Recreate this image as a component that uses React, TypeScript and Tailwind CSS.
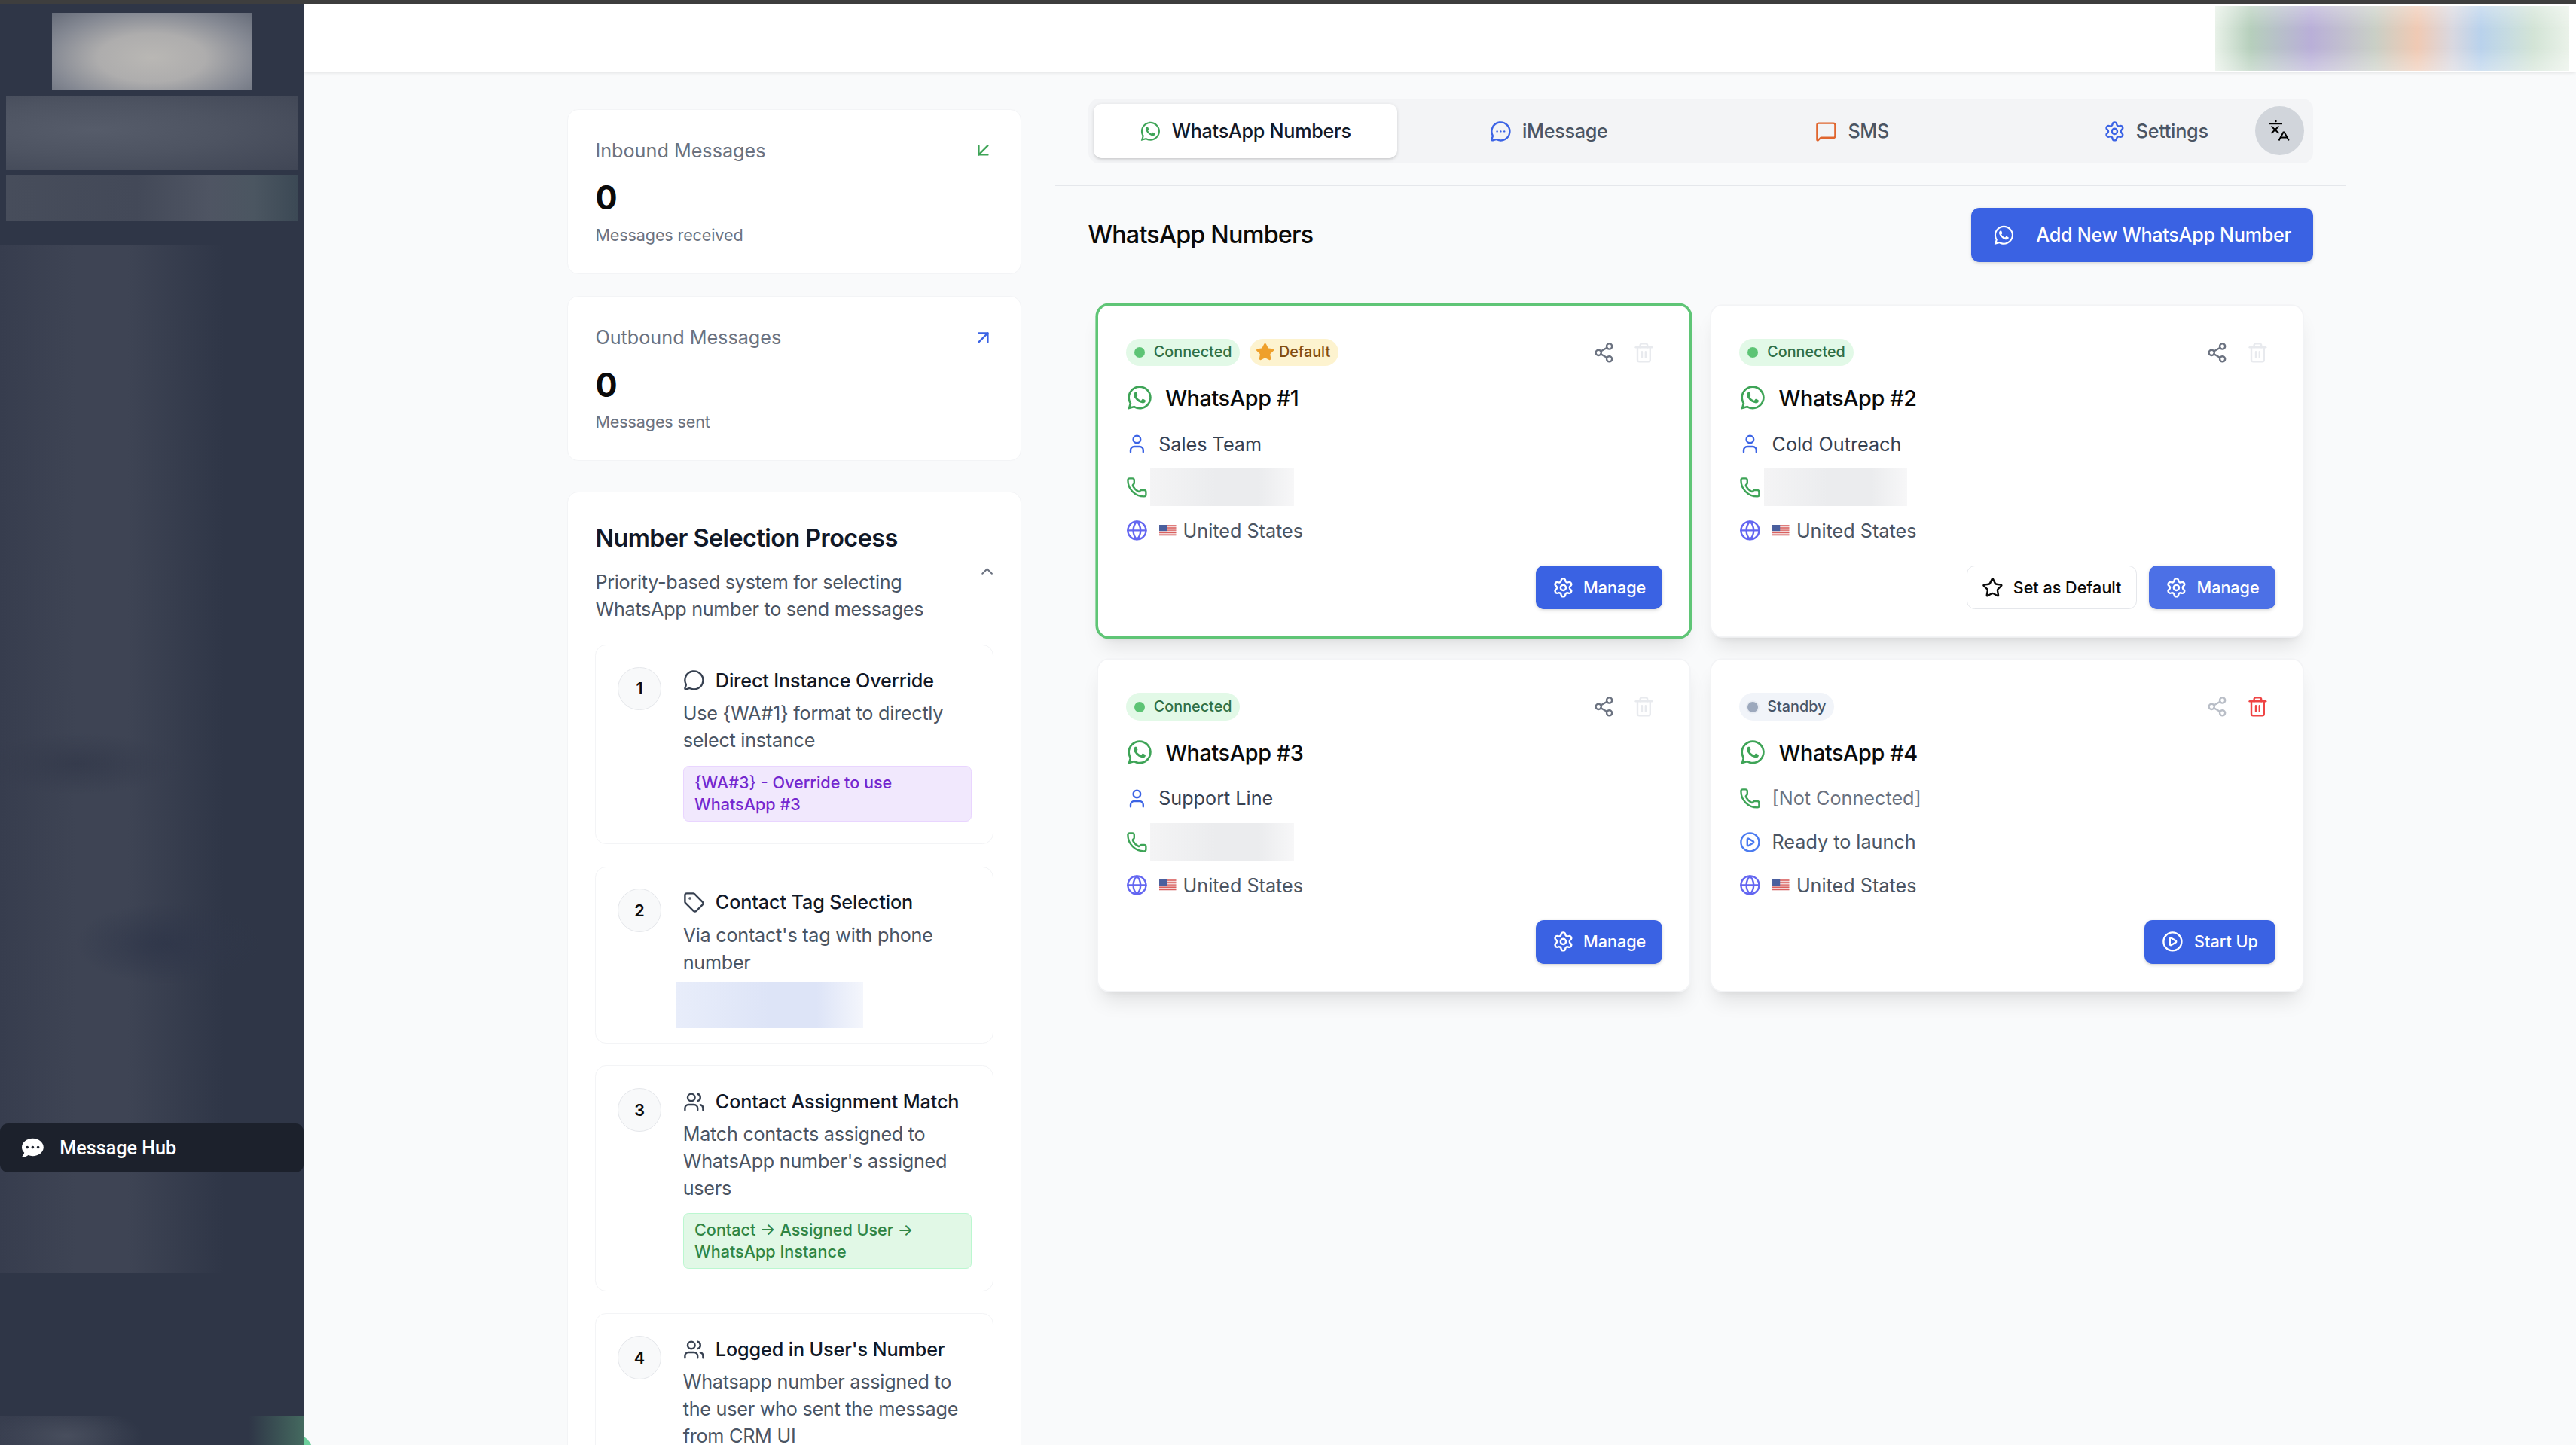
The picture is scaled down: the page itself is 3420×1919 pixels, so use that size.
import { ReactNode } from "react";
import {
  ArrowDownLeft,
  ArrowUpRight,
  ChevronUp,
  CirclePlay,
  Globe,
  MessageCircle,
  MessageCircleMore,
  MessageSquare,
  Phone,
  Settings,
  Share2,
  Star,
  Tag,
  Trash2,
  User,
  Users,
} from "lucide-react";
import { FaCommentDots, FaWhatsapp } from "react-icons/fa";

// the shot is a 1900px wide page at 1.8x, so the root is zoomed and the rest uses normal scale values

const TranslateIcon = () => (
  <svg viewBox="0 0 27 27" className="h-[15px] w-[15px]" fill="none" stroke="#000" strokeWidth="2">
    <circle cx="8.5" cy="1" r="1.2" fill="#000" stroke="none" />
    <path d="M0 4.2h17" />
    <path d="M2.5 7.5l10 9.5M12.5 7.5l-10 9.5" />
    <path d="M12.5 26.5l6-11 1.2 0 6 11M14.8 22.5h9" />
  </svg>
);

const UsFlag = () => (
  <svg viewBox="0 0 22 15" className="ml-[0.5px] h-[8.5px] w-[12.5px]">
    <rect width="22" height="15" fill="#f3d6d6" />
    <path d="M0 1h22M0 4h22M0 7h22M0 10h22M0 13h22" stroke="#d9605f" strokeWidth="1.4" />
    <rect width="10" height="8" fill="#4a5f9e" />
  </svg>
);

type CardRow = { icon: ReactNode; text?: ReactNode; blurred?: boolean; className?: string };

const userIcon = <User size={16} className="text-[#3b63e5]" />;
const phoneIcon = <Phone size={16} className="text-[#3ea457]" />;
const globeIcon = <Globe size={16} className="text-[#6366f1]" />;
const country = (
  <span className="flex items-center gap-[5px] text-[#4b5563]">
    <UsFlag />
    United States
  </span>
);

const ManageButton = ({ faded = false }: { faded?: boolean }) => (
  <button className={`flex h-8 items-center gap-[7px] rounded-md px-3 text-xs font-medium text-white shadow-sm ${faded ? "bg-[#4c70e6]" : "bg-[#3a62e3]"}`}>
    <Settings size={16} />
    Manage
  </button>
);

const Badge = ({ label, tone }: { label: string; tone: "green" | "gray" }) => (
  <span className={`flex h-[20.5px] items-center gap-[6.5px] rounded-full pl-[6px] pr-[6px] text-[11px] font-medium ${tone === "green" ? "bg-[#e2f9e7] text-[#2f6f45]" : "bg-[#f1f4f9] text-[#475569]"}`}>
    <span className={`h-2 w-2 rounded-full ${tone === "green" ? "bg-[#5dc475]" : "bg-[#9ca8bc] ring-1 ring-[#e6eaf1]"}`} />
    {label}
  </span>
);

const NumberCard = ({
  title,
  badges,
  rows,
  footer,
  active = false,
  shareFaded = false,
  trashRed = false,
}: {
  title: string;
  badges: ReactNode;
  rows: CardRow[];
  footer: ReactNode;
  active?: boolean;
  shareFaded?: boolean;
  trashRed?: boolean;
}) => (
  <div className={`rounded-lg bg-white pb-5 pl-[20.5px] pr-5 pt-[20.7px] shadow-lg ${active ? "ring-2 ring-[#5fc576]" : "ring-1 ring-gray-100"}`}>
    <div className="flex h-7 items-center justify-between">
      <div className="flex items-center gap-[7px]">{badges}</div>
      <div className="-mr-[0.5px] flex items-center gap-[1.5px]">
        <button className="p-1.5">
          <Share2 size={16} className={shareFaded ? "text-[#b9bec7]" : "text-[#6b7280]"} />
        </button>
        <button className="p-1.5">
          <Trash2 size={16} className={trashRed ? "text-[#ef4444]" : "text-[#e8eaee]"} />
        </button>
      </div>
    </div>
    <div className="mt-[7.5px] flex h-6 items-center gap-[9px] text-base font-medium tracking-[-0.014em] text-[#0a0a0a]">
      <FaWhatsapp size={20} className="text-[#3ea457]" />
      {title}
    </div>
    <div className="mt-3 flex flex-col gap-3">
      {rows.map((row, index) => (
        <div key={index} className={`flex h-5 items-center gap-2 text-sm ${row.className ?? "text-[#374151]"}`}>
          {row.icon}
          {row.blurred ? (
            <div className="-ml-[6px] h-[28px] w-[106px] bg-[linear-gradient(90deg,#f4f4f5,#ebecee_45%,#ebecee_75%,#f7f7f8)]" />
          ) : (
            row.text
          )}
        </div>
      ))}
    </div>
    <div className="mt-[15.8px] flex justify-end gap-[9px]">{footer}</div>
  </div>
);

const StatCard = ({ label, note, icon }: { label: string; note: string; icon: ReactNode }) => (
  <div className="rounded-lg border border-gray-100 bg-white px-5 pb-5 pt-5">
    <div className="flex items-center justify-between text-sm text-[#6b7280]">
      {label}
      {icon}
    </div>
    <div className="mt-[9px] text-2xl font-bold text-[#0a0a0a]">0</div>
    <div className="mt-[3.4px] text-xs tracking-[-0.006em] text-[#6b7280]">{note}</div>
  </div>
);

const Step = ({
  num,
  icon,
  title,
  children,
}: {
  num: number;
  icon: ReactNode;
  title: string;
  children: ReactNode;
}) => (
  <div className="flex gap-4 rounded-lg border border-gray-100 bg-white p-4">
    <div className="flex h-8 w-8 shrink-0 items-center justify-center rounded-full border border-gray-200 bg-[#f8f9fa] text-xs font-semibold text-[#0a0a0a]">
      {num}
    </div>
    <div className="min-w-0 flex-1">
      <div className="flex items-center gap-2 text-sm font-medium tracking-[-0.005em] text-[#111827]">
        <span className="text-[#374151]">{icon}</span>
        {title}
      </div>
      {children}
    </div>
  </div>
);

const Tab = ({ icon, label, active = false }: { icon: ReactNode; label: string; active?: boolean }) => (
  <div className={`flex h-10 items-center justify-center gap-2 rounded-md text-sm font-medium tracking-[-0.011em] ${active ? "bg-white text-[#111827] shadow-sm" : "text-[#4b5563]"}`}>
    {icon}
    {label}
  </div>
);

export default function App() {
  return (
    <div className="relative h-[1066.2px] w-[1900px] overflow-hidden bg-[#f9fafb] font-['Inter',sans-serif] [zoom:1.8]">
      <div className="h-[2.6px] bg-[#3e3e3e]" />
      {/* chat widget peeking out from behind the sidebar */}
      <div className="absolute left-[199px] top-[1057px] h-8 w-8 rounded-full bg-[#6bcf9b]" />

      <div className="flex h-[1063.6px]">
        {/* sidebar */}
        <aside className="relative z-10 flex w-56 shrink-0 flex-col bg-[#2f3647]">
          <div className="mx-auto mt-[6.8px] h-[57.3px] w-[147px] bg-[radial-gradient(ellipse_at_50%_58%,#b9b7b4_0%,#aeadad_38%,#858993_72%,#666c79_100%)]" />
          <div className="mx-[4.5px] mt-[4.3px] h-[54.5px] bg-[radial-gradient(ellipse_at_30%_45%,#565c6a_0%,#4e5462_45%,#404655_100%)]" />
          <div className="mx-[4.5px] mt-[3.5px] h-[34px] bg-[linear-gradient(90deg,#474d5b_0%,#434958_45%,#4f5563_70%,#4b5661_85%,#3c4955_100%)]" />
          <div className="mt-[17.5px] h-[758.5px] bg-[radial-gradient(ellipse_35%_3%_at_25%_50.5%,#353b4c_0%,transparent_100%),radial-gradient(ellipse_30%_4%_at_55%_68%,#30374a_0%,transparent_100%),linear-gradient(90deg,#373d4e_0%,#3e4454_25%,#3e4454_42%,#2f3647_74%)] pt-[648.5px]">
            <div className="flex h-9 items-center gap-[12px] rounded-md bg-[#1c212c] pl-4 font-['Roboto',sans-serif] text-sm font-medium text-white">
              <FaCommentDots size={16} />
              Message Hub
            </div>
          </div>
          <div className="mt-auto h-[22px] bg-[radial-gradient(ellipse_25%_100%_at_22%_70%,#484e5d_0%,transparent_100%),linear-gradient(90deg,#383e4f_0%,#2f3647_40%,#2f3647_82%,#44695f_100%)]" />
        </aside>

        <div className="flex min-w-0 flex-1 flex-col">
          <header className="flex h-[50.4px] shrink-0 justify-end bg-white pr-[5px] pt-[1.8px] shadow-sm">
            <div className="h-[47.8px] w-[261px] bg-[linear-gradient(180deg,rgba(255,255,255,0.3),transparent_35%,transparent_65%,rgba(255,255,255,0.35)),linear-gradient(90deg,#e8f1e8_0%,#b6cfbc_10%,#b9afd8_27%,#c9cfc6_45%,#f0cab4_57%,#d9d8e0_67%,#b9d2ec_75%,#d3e4d6_90%,#eaf2e9_100%)]" />
          </header>

          <main className="flex min-h-0 flex-1 gap-[24.4px] overflow-hidden pl-[194.6px]">
            {/* left column */}
            <div className="flex w-[335px] shrink-0 flex-col pt-[27.5px]">
              <StatCard label="Inbound Messages" note="Messages received" icon={<ArrowDownLeft size={16} className="text-[#3ea457]" />} />
              <div className="h-[16.6px] shrink-0" />
              <StatCard label="Outbound Messages" note="Messages sent" icon={<ArrowUpRight size={16} className="text-[#3b63e5]" />} />

              <div className="mt-[22.8px] rounded-lg border border-gray-100 bg-white px-5 pt-5">
                <h2 className="text-lg font-semibold tracking-[-0.017em] text-[#111827]">Number Selection Process</h2>
                <div className="mt-2 flex justify-between">
                  <p className="w-[270px] text-sm tracking-[-0.012em] text-[#4b5563]">Priority-based system for selecting WhatsApp number to send messages</p>
                  <ChevronUp size={14} className="-mr-[2px] -mt-[5px] text-[#6b7280]" />
                </div>

                <div className="mt-4 flex flex-col gap-[16.6px]">
                  <Step num={1} icon={<MessageCircle size={16} />} title="Direct Instance Override">
                    <p className="mt-1 text-sm tracking-[-0.01em] text-[#4b5563]">Use {"{WA#1}"} format to directly select instance</p>
                    <div className="mt-[9px] rounded border border-[#e9d5ff] bg-[#f1e8fd] px-2 py-1 text-xs font-medium text-[#7427cf]">
                      {"{WA#3}"} - Override to use WhatsApp #3
                    </div>
                  </Step>
                  <Step num={2} icon={<Tag size={16} />} title="Contact Tag Selection">
                    <p className="mt-1 text-sm tracking-[-0.01em] text-[#4b5563]">Via contact's tag with phone number</p>
                    <div className="-mb-[5px] -ml-[5px] mt-[4.5px] h-[34px] w-[138px] bg-[linear-gradient(90deg,#e8edfa_0%,#dde4f7_50%,#dde4f7_75%,#f4f6fc_100%)]" />
                  </Step>
                  <Step num={3} icon={<Users size={16} />} title="Contact Assignment Match">
                    <p className="mt-1 text-sm tracking-[-0.01em] text-[#4b5563]">Match contacts assigned to WhatsApp number's assigned users</p>
                    <div className="mt-2 rounded border border-[#bbf7d0] bg-[#e1f8e6] px-2 py-1 text-xs font-medium text-[#2f8544]">
                      Contact → Assigned User → WhatsApp Instance
                    </div>
                  </Step>
                  <Step num={4} icon={<Users size={16} />} title="Logged in User's Number">
                    <p className="mt-1 text-sm tracking-[-0.01em] text-[#4b5563]">Whatsapp number assigned to the user who sent the message from CRM UI</p>
                  </Step>
                </div>
              </div>
            </div>

            {/* right panel */}
            <section className="w-[952px] shrink-0 border-l border-gray-100 pt-[19.8px]">
              <div className="mx-6">
                <div className="relative grid h-12 grid-cols-4 rounded-lg bg-[#f3f4f6] p-1">
                  <Tab active label="WhatsApp Numbers" icon={<FaWhatsapp size={16} className="text-[#3ea457]" />} />
                  <Tab label="iMessage" icon={<MessageCircleMore size={16} className="text-[#3b63e5]" />} />
                  <Tab label="SMS" icon={<MessageSquare size={16} className="text-[#e0662f]" />} />
                  <Tab label="Settings" icon={<Settings size={16} className="text-[#3b63e5]" />} />
                  <button className="absolute right-[6.5px] top-[5.7px] flex h-9 w-9 items-center justify-center rounded-full bg-[#d1d5db]">
                    <TranslateIcon />
                  </button>
                </div>
              </div>
              <div className="mt-4 border-t border-[#e5e7eb] px-6 pt-4">
                <div className="flex h-10 items-center justify-between">
                  <h2 className="text-lg font-medium tracking-[-0.025em] text-[#0a0a0a]">WhatsApp Numbers</h2>
                  <button className="flex h-10 items-center gap-4 rounded-md bg-[#3a62e3] px-4 text-sm font-medium tracking-[-0.012em] text-white shadow-sm">
                    <FaWhatsapp size={16} />
                    Add New WhatsApp Number
                  </button>
                </div>
                <div className="mt-8 grid grid-cols-2 gap-x-[16.4px] gap-y-[17.6px] px-[7.5px]">
                  <NumberCard
                    active
                    title="WhatsApp #1"
                    badges={
                      <>
                        <Badge label="Connected" tone="green" />
                        <span className="flex h-[20.5px] items-center gap-[3.3px] rounded-full bg-[#fdf3cf] pl-[4.4px] pr-[6px] text-[11px] font-medium text-[#854d0e]">
                          <Star size={14} className="fill-[#efa02b] text-[#efa02b]" />
                          Default
                        </span>
                      </>
                    }
                    rows={[
                      { icon: userIcon, text: "Sales Team" },
                      { icon: phoneIcon, blurred: true },
                      { icon: globeIcon, text: country },
                    ]}
                    footer={<ManageButton />}
                  />
                  <NumberCard
                    title="WhatsApp #2"
                    badges={<Badge label="Connected" tone="green" />}
                    rows={[
                      { icon: userIcon, text: "Cold Outreach" },
                      { icon: phoneIcon, blurred: true },
                      { icon: globeIcon, text: country },
                    ]}
                    footer={
                      <>
                        <button className="flex h-8 items-center gap-[7px] rounded-md border border-gray-200 bg-white px-[11px] text-xs font-medium text-[#0a0a0a]">
                          <Star size={16} />
                          Set as Default
                        </button>
                        <ManageButton faded />
                      </>
                    }
                  />
                  <NumberCard
                    title="WhatsApp #3"
                    badges={<Badge label="Connected" tone="green" />}
                    rows={[
                      { icon: userIcon, text: "Support Line" },
                      { icon: phoneIcon, blurred: true },
                      { icon: globeIcon, text: country },
                    ]}
                    footer={<ManageButton />}
                  />
                  <NumberCard
                    shareFaded
                    trashRed
                    title="WhatsApp #4"
                    badges={<Badge label="Standby" tone="gray" />}
                    rows={[
                      { icon: phoneIcon, text: "[Not Connected]", className: "text-[#6b7280]" },
                      { icon: <CirclePlay size={16} className="text-[#4b7bf0]" />, text: "Ready to launch", className: "text-[#4b5563]" },
                      { icon: globeIcon, text: country },
                    ]}
                    footer={
                      <button className="flex h-8 items-center gap-[8px] rounded-md bg-[#3a62e3] px-[13px] text-xs font-medium text-white shadow-sm">
                        <CirclePlay size={16} />
                        Start Up
                      </button>
                    }
                  />
                </div>
              </div>
            </section>
          </main>
        </div>
      </div>
    </div>
  );
}
